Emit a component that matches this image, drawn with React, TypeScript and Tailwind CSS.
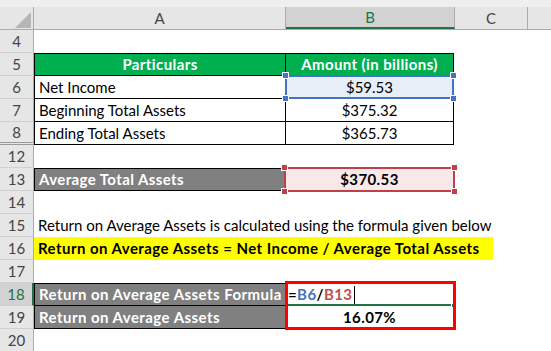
import React from 'react';

type RowProps = {
  n: string;
  active?: boolean;
  hiddenBelow?: boolean;
  children?: React.ReactNode;
};

// row number on the left + cells of that row
const Row = ({ n, active = false, hiddenBelow = false, children }: RowProps) => {
  let head = 'bg-[#e6e6e6] text-[#444444] border-r border-r-[#ababab]';
  if (active) head = 'bg-[#d2d2d2] text-[#217346] border-r-2 border-r-[#217346]';
  const line = hiddenBelow
    ? 'border-b-[3px] border-double border-b-[#9a9a9a]'
    : 'border-b border-b-[#d0d0d0]';

  return (
    <div className="flex h-[23px] shrink-0">
      <div className={`flex w-[34px] shrink-0 items-center justify-center text-[15px] ${head} ${line}`}>
        {n}
      </div>
      {children}
    </div>
  );
};

const Handle = ({ pos, color }: { pos: string; color: string }) => (
  <span className={`absolute h-[7px] w-[7px] border border-white ${pos} ${color}`} />
);

const App = () => {
  return (
    <div className="flex h-[351px] w-[551px] flex-col overflow-hidden bg-white font-['Lato',sans-serif] text-[15px] text-black">
      {/* column headers */}
      <div className="h-[7px] shrink-0 bg-[#efefef]" />
      <div className="flex h-[23px] shrink-0 border-b border-[#ababab] bg-[#e6e6e6] text-[15px] text-[#444444]">
        <div className="relative w-[34px] shrink-0 border-r border-[#ababab]">
          <svg className="absolute left-[15px] top-[5px]" width="16" height="16" viewBox="0 0 16 16">
            <polygon points="16,0 16,16 0,16" fill="#b5b5b5" />
          </svg>
        </div>
        <div className="flex w-[252px] shrink-0 items-center justify-center border-r border-[#ababab]">A</div>
        <div className="flex w-[169px] shrink-0 items-center justify-center border-r border-b-2 border-r-[#ababab] border-b-[#217346] bg-[#d2d2d2] text-[#217346]">
          B
        </div>
        <div className="flex w-[73px] shrink-0 items-center justify-center border-r border-[#ababab]">C</div>
        <div className="flex-1" />
      </div>

      <Row n="4" />

      <Row n="5">
        <div className="flex w-[251px] shrink-0 items-center justify-center border-y border-l border-black bg-[#00b050] font-bold tracking-[0.4px] text-white">
          Particulars
        </div>
        <div className="flex w-[169px] shrink-0 items-center justify-center border border-black bg-[#00b050] font-bold tracking-[0.4px] text-white">
          Amount (in billions)
        </div>
      </Row>

      <Row n="6">
        <div className="flex w-[251px] shrink-0 items-center border-b border-l border-black px-[4px]">Net Income</div>
        <div className="relative flex w-[169px] shrink-0 items-center justify-center border-x border-b border-black bg-[#e8eef8]">
          $59.53
          <div className="pointer-events-none absolute -inset-[1px] border-2 border-[#4472c4]" />
          <Handle pos="-left-[4px] -top-[4px]" color="bg-[#4472c4]" />
          <Handle pos="-right-[4px] -top-[4px]" color="bg-[#4472c4]" />
          <Handle pos="-left-[4px] -bottom-[4px]" color="bg-[#4472c4]" />
          <Handle pos="-right-[4px] -bottom-[4px]" color="bg-[#4472c4]" />
        </div>
      </Row>

      <Row n="7">
        <div className="flex w-[251px] shrink-0 items-center border-b border-l border-black px-[4px]">
          Beginning Total Assets
        </div>
        <div className="flex w-[169px] shrink-0 items-center justify-center border-x border-b border-black">$375.32</div>
      </Row>

      <Row n="8" hiddenBelow>
        <div className="flex w-[251px] shrink-0 items-center border-b border-l border-black px-[4px]">
          Ending Total Assets
        </div>
        <div className="flex w-[169px] shrink-0 items-center justify-center border-x border-b border-black">$365.73</div>
      </Row>

      <Row n="12" />

      <Row n="13">
        <div className="flex w-[251px] shrink-0 items-center border border-black bg-[#808080] px-[4px] font-bold tracking-[0.4px] text-white">
          Average Total Assets
        </div>
        <div className="relative flex w-[169px] shrink-0 items-center justify-center bg-[#f9e8e9] font-bold tracking-[0.4px]">
          $370.53
          <div className="pointer-events-none absolute -inset-[1px] border-2 border-[#c0404a]" />
          <Handle pos="-left-[4px] -top-[4px]" color="bg-[#c0404a]" />
          <Handle pos="-right-[4px] -top-[4px]" color="bg-[#c0404a]" />
          <Handle pos="-left-[4px] -bottom-[4px]" color="bg-[#c0404a]" />
          <Handle pos="-right-[4px] -bottom-[4px]" color="bg-[#c0404a]" />
        </div>
      </Row>

      <Row n="14" />

      <Row n="15">
        <div className="flex items-center whitespace-nowrap px-[4px]">
          Return on Average Assets is calculated using the formula given below
        </div>
      </Row>

      <Row n="16">
        <div className="flex w-[459px] shrink-0 items-center whitespace-nowrap bg-[#ffff00] px-[4px] font-bold tracking-[0.45px]">
          Return on Average Assets = Net Income / Average Total Assets
        </div>
      </Row>

      <Row n="17" />

      <Row n="18" active>
        <div className="flex w-[251px] shrink-0 items-center overflow-hidden whitespace-nowrap border-y border-l border-black bg-[#808080] px-[4px] font-bold tracking-[0.45px] text-white">
          Return on Average Assets Formula
        </div>
        <div className="relative flex w-[169px] shrink-0 items-center pl-[3px] font-bold tracking-[0.4px]">
          <span>=</span>
          <span className="text-[#4472c4]">B6</span>
          <span>/</span>
          <span className="text-[#c0504d]">B13</span>
          <span className="ml-[2px] inline-block h-[18px] w-[1px] bg-black" />
          <div className="absolute bottom-0 left-[1px] right-0 h-[2px] bg-[#217346]" />
          <span className="absolute -bottom-[2px] -right-[2px] h-[5px] w-[5px] border border-white bg-[#217346]" />
          <div className="pointer-events-none absolute -top-[2px] left-0 z-10 h-[49px] w-[171px] border-[3px] border-[#ff0000]" />
        </div>
      </Row>

      <Row n="19">
        <div className="flex w-[251px] shrink-0 items-center border-b border-l border-black bg-[#808080] px-[4px] font-bold tracking-[0.45px] text-white">
          Return on Average Assets
        </div>
        <div className="flex w-[169px] shrink-0 items-center justify-center font-bold tracking-[0.4px]">16.07%</div>
      </Row>

      <Row n="20" />
    </div>
  );
};

export default App;
